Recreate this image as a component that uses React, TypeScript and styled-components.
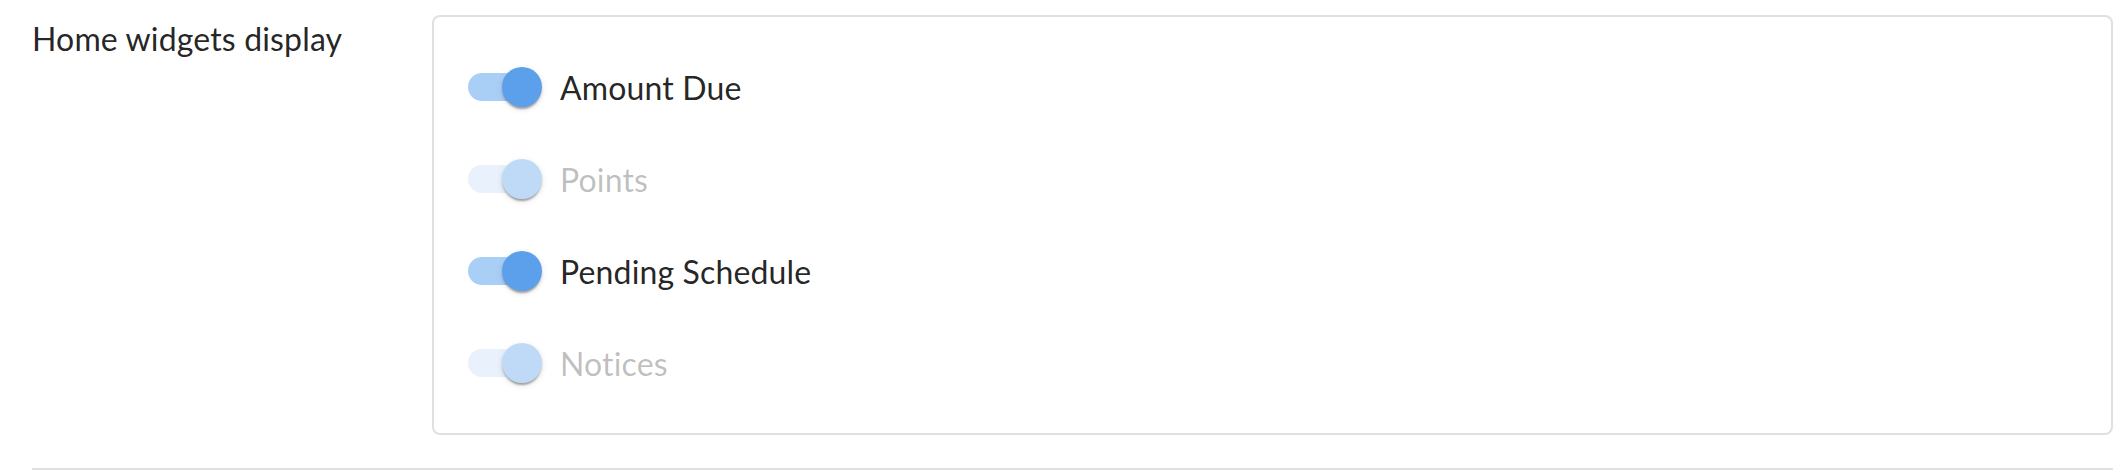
import React from "react";
import styled, { createGlobalStyle, css } from "styled-components";

const GlobalStyle = createGlobalStyle`
  html, body {
    margin: 0;
    padding: 0;
    background: #ffffff;
  }
  body {
    font-family: Lato, "Noto Sans", sans-serif;
    color: rgba(0, 0, 0, 0.87);
  }
`;

const Section = styled.section`
  padding: 15px 15px 0 32px;
  width: 2128px;
  box-sizing: border-box;
`;

const Row = styled.div`
  display: flex;
  align-items: flex-start;
`;

const Label = styled.div`
  width: 400px;
  flex: none;
  font-size: 32px;
  line-height: 48px;
  letter-spacing: 0.15px;
  color: rgba(0, 0, 0, 0.87);
`;

const Card = styled.div`
  flex: 1;
  border: 2px solid #e0e0e0;
  border-radius: 8px;
  padding: 32px;
  display: flex;
  flex-direction: column;
  gap: 16px;
`;

const Divider = styled.hr`
  margin: 33px 0 0 0;
  border: none;
  height: 2px;
  background: #e0e0e0;
`;

const ControlLabel = styled.label<{ $disabled: boolean }>`
  display: flex;
  align-items: center;
  margin-left: -22px;
  font-size: 32px;
  line-height: 48px;
  letter-spacing: 0.15px;
  color: ${(p) => (p.$disabled ? "rgba(0, 0, 0, 0.26)" : "rgba(0, 0, 0, 0.87)")};
  cursor: ${(p) => (p.$disabled ? "default" : "pointer")};
`;

const LabelText = styled.span`
  padding-top: 2px;
`;

const SwitchRoot = styled.span`
  position: relative;
  display: inline-flex;
  width: 116px;
  height: 76px;
  padding: 24px;
  box-sizing: border-box;
  flex: none;
`;

const Track = styled.span<{ $disabled: boolean; $checked: boolean }>`
  width: 100%;
  height: 100%;
  border-radius: 14px;
  background: ${(p) =>
    p.$checked ? (p.$disabled ? "#e9f2fc" : "#aacff6") : p.$disabled ? "#f0f0f0" : "#c4c4c4"};
`;

const Thumb = styled.span<{ $disabled: boolean; $checked: boolean }>`
  position: absolute;
  top: 18px;
  left: 18px;
  width: 40px;
  height: 40px;
  border-radius: 50%;
  box-shadow: 0 4px 2px -2px rgba(0, 0, 0, 0.2), 0 2px 2px 0 rgba(0, 0, 0, 0.14),
    0 2px 6px 0 rgba(0, 0, 0, 0.12);
  ${(p) =>
    p.$checked &&
    css`
      transform: translateX(40px);
    `}
  background: ${(p) =>
    p.$checked ? (p.$disabled ? "#bfdaf6" : "#5ca0ec") : p.$disabled ? "#f5f5f5" : "#fafafa"};
`;

type Item = { label: string; checked: boolean; disabled: boolean };

const items: Item[] = [
  { label: "Amount Due", checked: true, disabled: false },
  { label: "Points", checked: true, disabled: true },
  { label: "Pending Schedule", checked: true, disabled: false },
  { label: "Notices", checked: true, disabled: true },
];

function Toggle({ label, checked, disabled }: Item) {
  return (
    <ControlLabel $disabled={disabled}>
      <SwitchRoot>
        <Track $checked={checked} $disabled={disabled} />
        <Thumb $checked={checked} $disabled={disabled} />
      </SwitchRoot>
      <LabelText>{label}</LabelText>
    </ControlLabel>
  );
}

export default function App() {
  return (
    <>
      <GlobalStyle />
      <Section>
        <Row>
          <Label>Home widgets display</Label>
          <Card>
            {items.map((it) => (
              <Toggle key={it.label} {...it} />
            ))}
          </Card>
        </Row>
        <Divider />
      </Section>
    </>
  );
}
